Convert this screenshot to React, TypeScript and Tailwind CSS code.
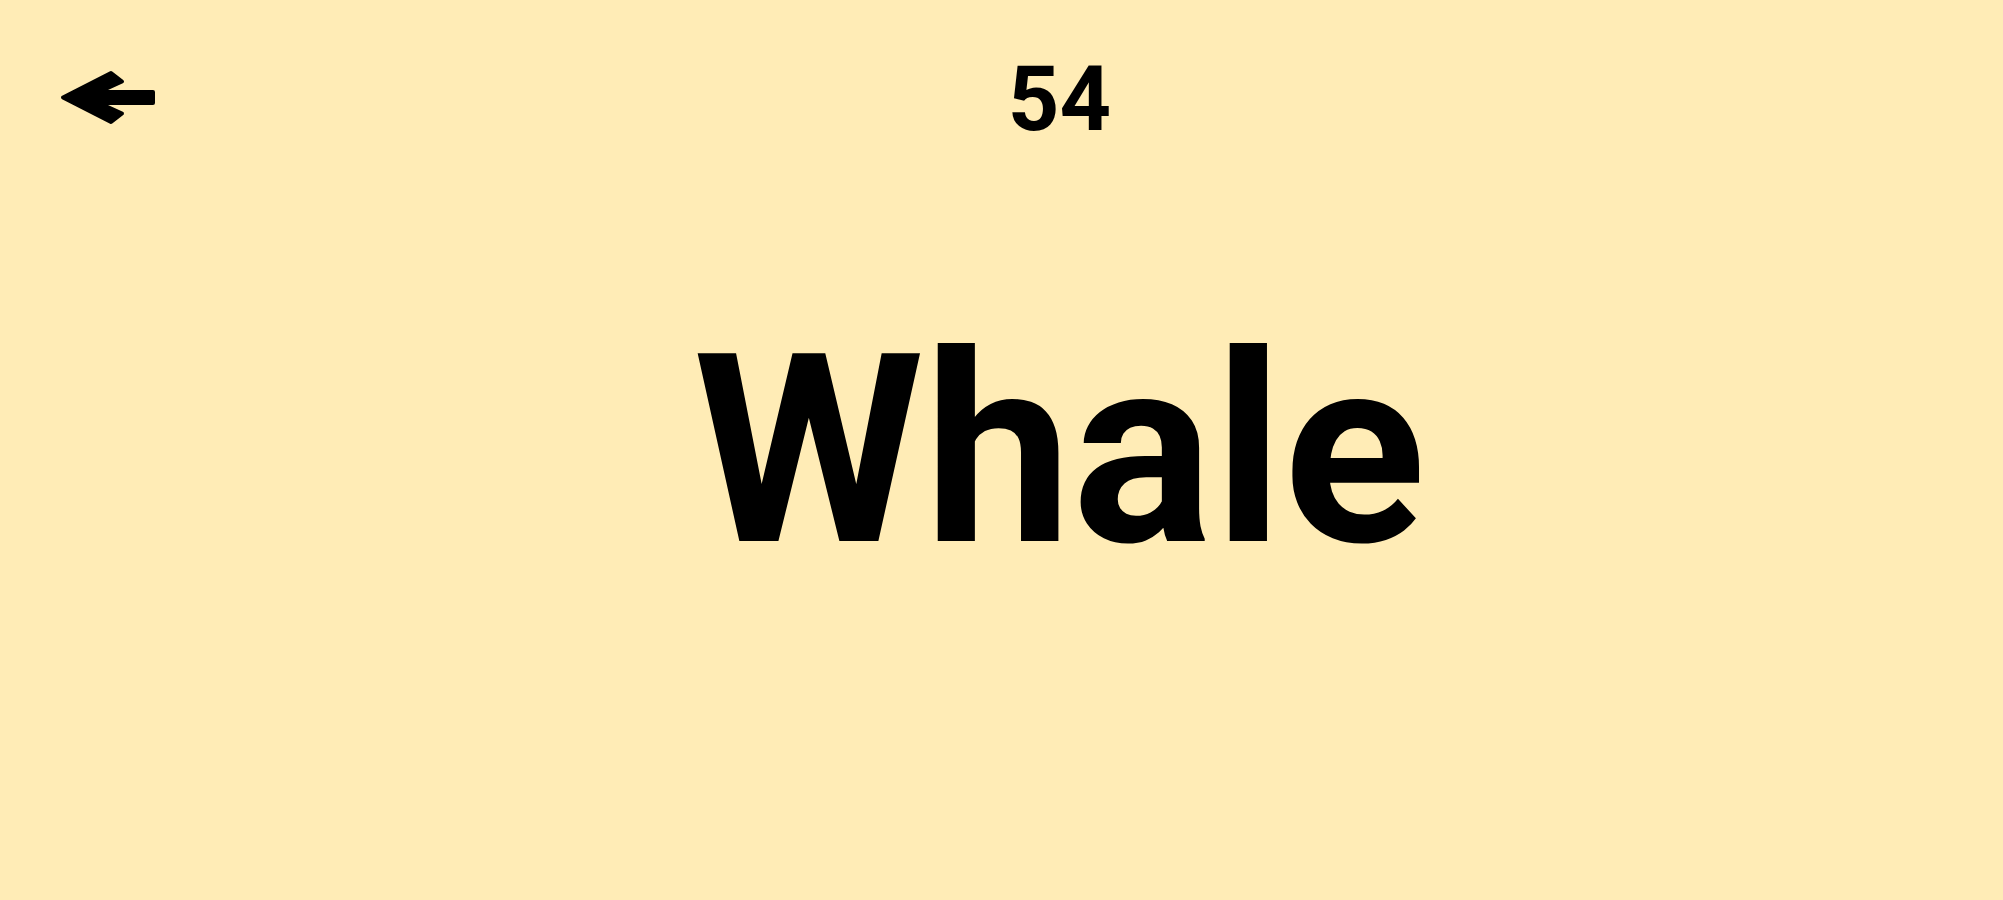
import React from "react";

const BackArrow = () => (
    <svg width="104" height="56" viewBox="0 0 104 56" className="block">
        <polygon
            points="7,27.5 55,3 66,11.5 43,22 97,22 97,33 43,33 66,43.5 55,52"
            fill="#000"
            stroke="#000"
            strokeWidth="4"
            strokeLinejoin="round"
        />
    </svg>
);

export default function App() {
    return (
        <div className="flex h-[900px] w-full bg-[#ffecb6] text-black" style={{ fontFamily: "Roboto, 'Liberation Sans', sans-serif" }}>
            <div className="w-[116px] shrink-0 pt-[70px] pl-[56px]">
                <button type="button" aria-label="Back">
                    <BackArrow />
                </button>
            </div>
            <div className="flex flex-1 flex-col items-center">
                <p className="pt-[55px] text-[90px] font-bold leading-none">54</p>
                <h1 className="pt-[174px] text-[264px] font-bold leading-none">Whale</h1>
            </div>
        </div>
    );
}
